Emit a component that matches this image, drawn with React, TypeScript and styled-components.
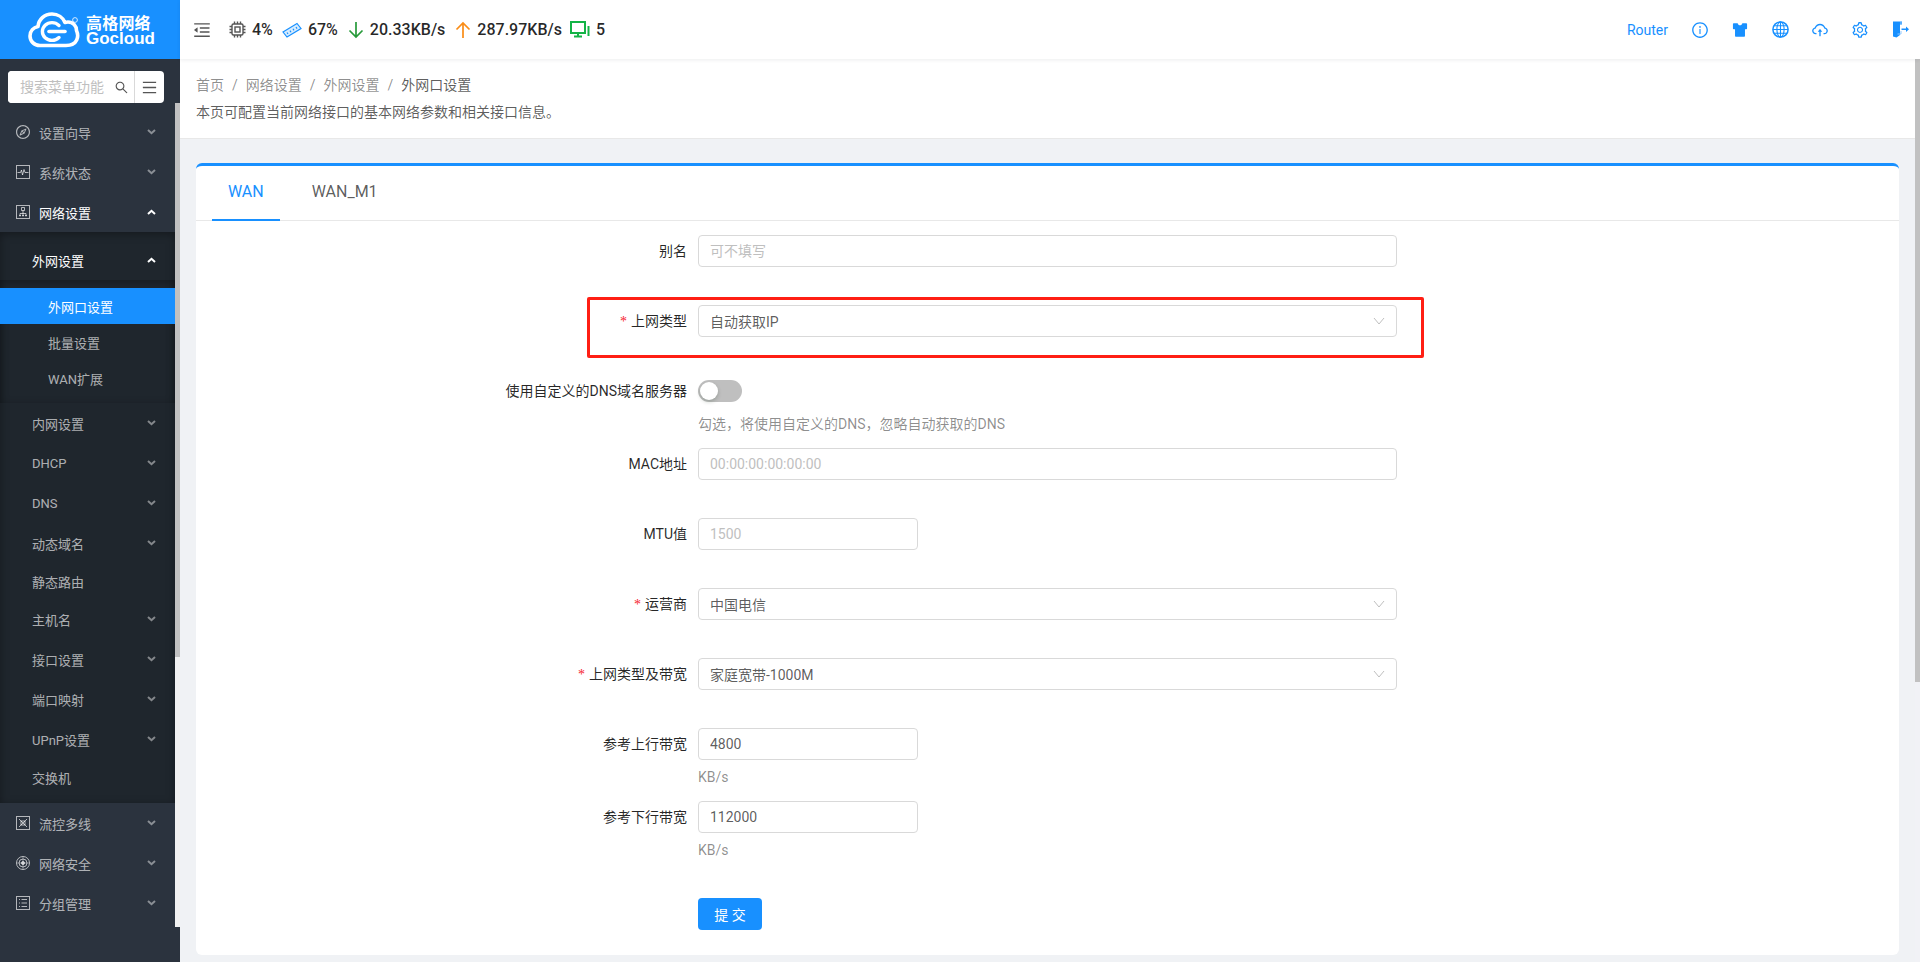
import React from 'react';
import styled, { createGlobalStyle } from 'styled-components';
import {
  AiOutlineInfoCircle,
  AiFillSkin,
  AiOutlineCloudUpload,
  AiOutlineSetting,
  AiOutlineSearch,
  AiOutlineMenu,
  AiOutlineCompass,
  AiOutlineMenuFold,
} from 'react-icons/ai';

const FONT = `Roboto, "Noto Sans CJK SC", sans-serif`;

const GlobalStyle = createGlobalStyle`
  html, body {
    margin: 0;
    height: 100%;
    overflow: hidden;
    background: #f0f2f5;
    font-family: ${FONT};
    font-size: 14px;
  }
  * { box-sizing: border-box; }
`;

const Page = styled.div`
  display: flex;
  width: 1920px;
  height: 962px;
`;

/* ---------- sidebar ---------- */

const Sidebar = styled.aside`
  width: 180px;
  flex: none;
  display: flex;
  flex-direction: column;
  background: #2b333e;
`;

const LogoBar = styled.div`
  height: 59px;
  flex: none;
  background: #1890ff;
  display: flex;
  align-items: center;
  padding: 0 0 0 28px;
  gap: 6px;
  color: #fff;
`;

const LogoText = styled.div`
  display: flex;
  flex-direction: column;
  margin-top: 1px;
`;

const LogoCn = styled.span`
  font: 700 16px/18px "Noto Sans CJK SC", sans-serif;
  letter-spacing: 0.2px;
`;

const LogoEn = styled.span`
  font: 700 17px/16px "Liberation Sans", sans-serif;
`;

const SearchWrap = styled.div`
  flex: none;
  height: 44px;
  padding: 12px 16px 0 8px;
`;

const SearchBox = styled.div`
  display: flex;
  height: 32px;
  background: #fff;
  border-radius: 4px;
  overflow: hidden;
  align-items: center;
`;

const SearchInput = styled.input`
  width: 100px;
  min-width: 0;
  height: 100%;
  border: 0;
  outline: 0;
  padding: 0 0 0 12px;
  font: 14px ${FONT};
  &::placeholder { color: #bfbfbf; }
`;

const SearchGlyph = styled.span`
  width: 26px;
  display: flex;
  justify-content: center;
  color: #555;
  font-size: 15px;
`;

const MenuToggle = styled.span`
  flex: 1;
  height: 100%;
  display: flex;
  align-items: center;
  justify-content: center;
  border-left: 1px solid #d9d9d9;
  color: #555;
  font-size: 17px;
`;

const SideBody = styled.div`
  display: flex;
  height: 824px;
  flex: none;
`;

const MenuList = styled.nav`
  flex: 1;
  padding-top: 9px;
  min-width: 0;
  overflow: hidden;
`;

const SideTrack = styled.div`
  width: 5px;
  flex: none;
  background: #f1f1f1;
`;

const SideThumb = styled.div`
  height: 554px;
  background: #c1c1c1;
`;

const MenuRow = styled.div<{ $active?: boolean; $h?: number; $indent: number }>`
  height: ${p => p.$h ?? 40}px;
  display: flex;
  align-items: center;
  padding-left: ${p => p.$indent}px;
  padding-right: 19px;
  font-size: 13px;
  color: ${p => (p.$active ? '#fff' : 'rgba(255, 255, 255, 0.65)')};
`;

const MenuIcon = styled.span`
  width: 24px;
  flex: none;
  display: flex;
  color: rgba(255, 255, 255, 0.65);
  font-size: 16px;
  margin-left: -1px;
`;

const MenuLabel = styled.span`
  flex: 1;
`;

const SubMenu = styled.div`
  background: #1f262d;
  padding: 8px 0;
  box-shadow: inset 0 2px 8px rgba(0, 0, 0, 0.35);
`;

const SubInner = styled.div`
  padding: 8px 0 7px;
  box-shadow: inset 0 2px 8px rgba(0, 0, 0, 0.3);
`;

const LeafRow = styled.div<{ $selected?: boolean }>`
  height: 36px;
  display: flex;
  align-items: center;
  padding-left: 48px;
  font-size: 13px;
  color: ${p => (p.$selected ? '#fff' : 'rgba(255, 255, 255, 0.65)')};
  background: ${p => (p.$selected ? '#1890ff' : 'transparent')};
`;

const Chevron = ({ up, active }: { up?: boolean; active?: boolean }) => (
  <svg width="9" height="6" viewBox="0 0 9 6">
    <path
      d={up ? 'M1 5L4.5 1.8L8 5' : 'M1 1L4.5 4.2L8 1'}
      fill="none"
      stroke={active ? '#fff' : 'rgba(255,255,255,0.45)'}
      strokeWidth="2"
    />
  </svg>
);

const FrameIcon = ({ children }: { children: React.ReactNode }) => (
  <svg width="14" height="14" viewBox="0 0 14 14" fill="none" stroke="currentColor" strokeWidth="1" style={{ marginLeft: 1 }}>
    <rect x="0.5" y="0.5" width="13" height="13" />
    {children}
  </svg>
);

const PulseIcon = () => (
  <FrameIcon>
    <path d="M1.5 7.5H4.5L5.5 5L6.5 10L8 4.5L9 7.5H12.5" />
  </FrameIcon>
);

const NetIcon = () => (
  <FrameIcon>
    <path d="M5.5 2.5H8.5V5.5H5.5ZM7 5.5V8M4 11.5V8.5H10V11.5M7 8V11.5M3 10.5H5M6 10.5H8M9 10.5H11" />
  </FrameIcon>
);

const FlowIcon = () => (
  <FrameIcon>
    <path d="M3 3L11 11M11 3L3 11M5 5H9V9H5Z" />
  </FrameIcon>
);

const ListIcon = () => (
  <FrameIcon>
    <path d="M5.5 3.5H11M5.5 7H11M5.5 10.5H11M3 3.5H4M3 7H4M3 10.5H4" />
  </FrameIcon>
);

const RadarIcon = () => (
  <svg width="14" height="14" viewBox="0 0 14 14" fill="none" stroke="currentColor" strokeWidth="1" style={{ marginLeft: 1 }}>
    <circle cx="7" cy="7" r="6.5" />
    <circle cx="7" cy="7" r="4" />
    <circle cx="7" cy="7" r="1.5" fill="currentColor" />
    <path d="M0.5 7H13.5M7 0.5V13.5" strokeWidth="0.6" />
  </svg>
);

type ParentItem = { label: string; icon: React.ReactNode };

const topBefore: ParentItem[] = [
  { label: '设置向导', icon: <AiOutlineCompass /> },
  { label: '系统状态', icon: <PulseIcon /> },
];

const topAfter: ParentItem[] = [
  { label: '流控多线', icon: <FlowIcon /> },
  { label: '网络安全', icon: <RadarIcon /> },
  { label: '分组管理', icon: <ListIcon /> },
];

const subItems: { label: string; leaf?: boolean }[] = [
  { label: '内网设置' },
  { label: 'DHCP' },
  { label: 'DNS' },
  { label: '动态域名' },
  { label: '静态路由', leaf: true },
  { label: '主机名' },
  { label: '接口设置' },
  { label: '端口映射' },
  { label: 'UPnP设置' },
  { label: '交换机', leaf: true },
];

const SideMenu = () => (
  <MenuList>
    {topBefore.map(item => (
      <MenuRow key={item.label} $indent={16}>
        <MenuIcon>{item.icon}</MenuIcon>
        <MenuLabel>{item.label}</MenuLabel>
        <Chevron />
      </MenuRow>
    ))}
    <MenuRow $indent={16} $active>
      <MenuIcon><NetIcon /></MenuIcon>
      <MenuLabel>网络设置</MenuLabel>
      <Chevron up active />
    </MenuRow>
    <SubMenu>
      <MenuRow $indent={32} $active>
        <MenuLabel>外网设置</MenuLabel>
        <Chevron up active />
      </MenuRow>
      <SubInner>
        <LeafRow $selected>外网口设置</LeafRow>
        <LeafRow>批量设置</LeafRow>
        <LeafRow>WAN扩展</LeafRow>
      </SubInner>
      {subItems.map(item => (
        <MenuRow key={item.label} $indent={32} $h={item.leaf ? 36 : 40}>
          <MenuLabel>{item.label}</MenuLabel>
          {!item.leaf && <Chevron />}
        </MenuRow>
      ))}
    </SubMenu>
    {topAfter.map(item => (
      <MenuRow key={item.label} $indent={16}>
        <MenuIcon>{item.icon}</MenuIcon>
        <MenuLabel>{item.label}</MenuLabel>
        <Chevron />
      </MenuRow>
    ))}
  </MenuList>
);

const CloudLogo = () => (
  <svg width="52" height="36" viewBox="0 0 52 36" fill="none">
    <path
      d="M12 33.5C6 33.5 2 29 2 24C2 19 5.5 15.5 10 14.5C10.5 7.5 16.5 2 24 2C30 2 35 5.5 37 10.5C38 10.2 39 10 40 10C45 10 48.5 14 48.5 18.5C51 24 50 33.5 38 33.5Z"
      stroke="#fff"
      strokeWidth="3.6"
      strokeLinejoin="round"
    />
    <path d="M31 13.5C29 11.5 26.5 10.6 24 10.6C18.5 10.6 14.4 14.6 14.4 19.5C14.4 24.4 18.5 28.4 24 28.4C26.5 28.4 29 27.5 31 25.5" stroke="#fff" strokeWidth="3.4" strokeLinecap="round" />
    <path d="M21 19.5H37" stroke="#fff" strokeWidth="3.6" strokeLinecap="round" />
    <circle cx="47" cy="8" r="2.4" stroke="#fff" strokeWidth="0.8" />
  </svg>
);

/* ---------- top bar ---------- */

const Content = styled.div`
  flex: 1;
  min-width: 0;
  display: flex;
  flex-direction: column;
`;

const TopBar = styled.header`
  height: 59px;
  flex: none;
  background: #fff;
  display: flex;
  align-items: center;
  box-shadow: 0 1px 4px rgba(0, 21, 41, 0.08);
  position: relative;
  z-index: 1;
`;

const FoldButton = styled.span`
  display: flex;
  margin: 0 17px 0 12px;
  font-size: 20px;
  color: #555;
`;

const Stats = styled.div`
  display: flex;
  align-items: center;
  font: 500 16px ${FONT};
  color: rgba(0, 0, 0, 0.85);
`;

const Stat = styled.span<{ $gap: number }>`
  display: flex;
  align-items: center;
  gap: 6px;
  margin-right: ${p => p.$gap}px;
`;

const TopRight = styled.div`
  margin-left: auto;
  display: flex;
  align-items: center;
  color: #1890ff;
`;

const RouterLink = styled.span`
  font-size: 14px;
  margin-right: 12px;
`;

const TopAction = styled.span`
  width: 40px;
  display: flex;
  justify-content: center;
  font-size: 18px;
`;

const ChipIcon = () => (
  <svg width="17" height="17" viewBox="0 0 17 17" fill="none" stroke="#555" strokeWidth="1.4">
    <rect x="3" y="3" width="11" height="11" rx="1.5" />
    <rect x="6" y="6" width="5" height="5" />
    <path d="M5.5 0.5V3M8.5 0.5V3M11.5 0.5V3M5.5 14V16.5M8.5 14V16.5M11.5 14V16.5M0.5 5.5H3M0.5 8.5H3M0.5 11.5H3M14 5.5H16.5M14 8.5H16.5M14 11.5H16.5" />
  </svg>
);

const RamIcon = () => (
  <svg width="20" height="16" viewBox="0 0 20 16" fill="none" stroke="#1890ff" strokeWidth="1.2">
    <path d="M1 10L15 1.5L19 6.5L5 15Z" fill="#d6ecff" />
    <path d="M5 10.5L6 12M8 8.6L9 10.2M11 6.8L12 8.4M14 5L15 6.6" />
  </svg>
);

const ArrowIcon = ({ up, color }: { up?: boolean; color: string }) => (
  <svg width="16" height="18" viewBox="0 0 16 18" fill="none" stroke={color} strokeWidth="1.7">
    {up ? <path d="M8 17V2M1.5 8.5L8 2L14.5 8.5" /> : <path d="M8 1V16M1.5 9.5L8 16L14.5 9.5" />}
  </svg>
);

const MonitorIcon = () => (
  <svg width="20" height="17" viewBox="0 0 20 17" fill="none">
    <rect x="1" y="1" width="14" height="11" stroke="#13b346" strokeWidth="2" fill="#fff" />
    <path d="M8 12V15M4 15.5H12" stroke="#13b346" strokeWidth="2" />
    <path d="M18.5 5V15" stroke="#13b346" strokeWidth="2" />
  </svg>
);

const GlobeIcon = () => (
  <svg width="17" height="17" viewBox="0 0 17 17" fill="none" stroke="#1890ff" strokeWidth="1.1">
    <circle cx="8.5" cy="8.5" r="7.6" strokeWidth="1.5" />
    <ellipse cx="8.5" cy="8.5" rx="3.6" ry="7.6" />
    <path d="M8.5 1V16M1 8.5H16M2 4.8H15M2 12.2H15" />
  </svg>
);

const DoorIcon = () => (
  <svg width="17" height="17" viewBox="0 0 17 17">
    <path d="M1 0.5H10V3.5H8L8 14L4.5 16.5L1 15.5Z" fill="#1890ff" />
    <path d="M9 0.5V3.5M9 10V13H5.5" stroke="#8ec8ff" strokeWidth="1" fill="none" />
    <path d="M9.5 7.5H14V5.5L17 8.2L14 11V9H9.5Z" fill="#1890ff" />
  </svg>
);

/* ---------- main ---------- */

const MainRow = styled.div`
  flex: 1;
  min-height: 0;
  display: flex;
`;

const MainScroll = styled.main`
  flex: 1;
  min-width: 0;
`;

const PageTrack = styled.div`
  width: 5px;
  flex: none;
  background: #f1f2f6;
`;

const PageThumb = styled.div`
  height: 623px;
  background: #c1c1c1;
`;

const PageHeader = styled.section`
  height: 80px;
  background: #fff;
  border-bottom: 1px solid #e8e8e8;
  padding: 16px 16px 0;
`;

const Crumbs = styled.div`
  line-height: 20px;
  display: flex;
  color: rgba(0, 0, 0, 0.45);
`;

const CrumbSep = styled.span`
  margin: 0 8px;
`;

const CrumbLast = styled.span`
  color: rgba(0, 0, 0, 0.65);
`;

const PageDesc = styled.div`
  margin-top: 7px;
  line-height: 20px;
  color: rgba(0, 0, 0, 0.65);
`;

const Card = styled.section`
  margin: 24px 16px 0;
  height: 792px;
  background: #fff;
  border-top: 3px solid #1890ff;
  border-radius: 6px;
`;

const Tabs = styled.div`
  height: 55px;
  display: flex;
  padding-left: 16px;
  border-bottom: 1px solid #e8e8e8;
  gap: 16px;
`;

const Tab = styled.div<{ $active?: boolean }>`
  height: 55px;
  padding: 0 16px;
  display: flex;
  align-items: center;
  font-size: 16px;
  padding-bottom: 2px;
  color: ${p => (p.$active ? '#1890ff' : 'rgba(0, 0, 0, 0.65)')};
  border-bottom: 2px solid ${p => (p.$active ? '#1890ff' : 'transparent')};
`;

const FormBody = styled.form`
  padding-top: 14px;
`;

const FormRow = styled.div<{ $extra?: boolean }>`
  position: relative;
  display: grid;
  grid-template-columns: 502px 1fr;
  margin-bottom: ${p => (p.$extra ? 13 : 38)}px;
`;

const Label = styled.label`
  height: 32px;
  line-height: 32px;
  padding-right: 11px;
  text-align: right;
  color: rgba(0, 0, 0, 0.85);
`;

const Star = styled.span`
  color: #f5222d;
  margin-right: 4px;
  font-family: "Liberation Serif", serif;
`;

const TextInput = styled.input<{ $short?: boolean }>`
  display: block;
  width: ${p => (p.$short ? 220 : 699)}px;
  height: 32px;
  padding: 0 11px;
  border: 1px solid #d9d9d9;
  border-radius: 4px;
  outline: 0;
  font: 14px ${FONT};
  color: rgba(0, 0, 0, 0.65);
  &::placeholder { color: #bfbfbf; }
`;

const SelectBox = styled.div`
  width: 699px;
  height: 32px;
  padding: 0 11px;
  border: 1px solid #d9d9d9;
  border-radius: 4px;
  display: flex;
  align-items: center;
  justify-content: space-between;
  color: rgba(0, 0, 0, 0.65);
`;

const SwitchLine = styled.div`
  height: 32px;
  display: flex;
  align-items: center;
`;

const Switch = styled.span`
  width: 44px;
  height: 22px;
  border-radius: 11px;
  background: #bfbfbf;
  padding: 2px;
  display: block;
`;

const Knob = styled.span`
  display: block;
  width: 18px;
  height: 18px;
  border-radius: 50%;
  background: #fff;
  box-shadow: 0 2px 4px rgba(0, 35, 11, 0.2);
`;

const Extra = styled.div`
  margin-top: 6px;
  line-height: 22px;
  color: rgba(0, 0, 0, 0.45);
`;

const Highlight = styled.div`
  position: absolute;
  left: 391px;
  top: -8px;
  width: 837px;
  height: 61px;
  border: 3px solid #ff1f14;
  border-radius: 2px;
  pointer-events: none;
`;

const SubmitRow = styled.div`
  padding: 24px 0 0 502px;
`;

const SubmitButton = styled.button`
  width: 64px;
  height: 32px;
  border: 0;
  border-radius: 4px;
  background: #1890ff;
  color: #fff;
  font: 14px ${FONT};
  letter-spacing: 0;
`;

const SelectArrow = () => (
  <svg width="12" height="8" viewBox="0 0 12 8" fill="none" stroke="#bfbfbf" strokeWidth="1">
    <path d="M1 1L6 7L11 1" />
  </svg>
);

const Select = ({ value }: { value: string }) => (
  <SelectBox>
    {value}
    <SelectArrow />
  </SelectBox>
);

export default function App() {
  return (
    <Page>
      <GlobalStyle />
      <Sidebar>
        <LogoBar>
          <CloudLogo />
          <LogoText>
            <LogoCn>高格网络</LogoCn>
            <LogoEn>Gocloud</LogoEn>
          </LogoText>
        </LogoBar>
        <SearchWrap>
          <SearchBox>
            <SearchInput placeholder="搜索菜单功能" readOnly />
            <SearchGlyph><AiOutlineSearch /></SearchGlyph>
            <MenuToggle><AiOutlineMenu /></MenuToggle>
          </SearchBox>
        </SearchWrap>
        <SideBody>
          <SideMenu />
          <SideTrack><SideThumb /></SideTrack>
        </SideBody>
      </Sidebar>
      <Content>
        <TopBar>
          <FoldButton><AiOutlineMenuFold /></FoldButton>
          <Stats>
            <Stat $gap={9}><ChipIcon />4%</Stat>
            <Stat $gap={10}><RamIcon />67%</Stat>
            <Stat $gap={10}><ArrowIcon color="#279a3a" />20.33KB/s</Stat>
            <Stat $gap={8}><ArrowIcon up color="#fa8c16" />287.97KB/s</Stat>
            <Stat $gap={0}><MonitorIcon />5</Stat>
          </Stats>
          <TopRight>
            <RouterLink>Router</RouterLink>
            <TopAction><AiOutlineInfoCircle /></TopAction>
            <TopAction><AiFillSkin /></TopAction>
            <TopAction><GlobeIcon /></TopAction>
            <TopAction><AiOutlineCloudUpload /></TopAction>
            <TopAction><AiOutlineSetting /></TopAction>
            <TopAction><DoorIcon /></TopAction>
          </TopRight>
        </TopBar>
        <MainRow>
          <MainScroll>
            <PageHeader>
              <Crumbs>
                首页<CrumbSep>/</CrumbSep>
                网络设置<CrumbSep>/</CrumbSep>
                外网设置<CrumbSep>/</CrumbSep>
                <CrumbLast>外网口设置</CrumbLast>
              </Crumbs>
              <PageDesc>本页可配置当前网络接口的基本网络参数和相关接口信息。</PageDesc>
            </PageHeader>
            <Card>
              <Tabs>
                <Tab $active>WAN</Tab>
                <Tab>WAN_M1</Tab>
              </Tabs>
              <FormBody>
                <FormRow>
                  <Label>别名</Label>
                  <TextInput placeholder="可不填写" readOnly />
                </FormRow>
                <FormRow>
                  <Highlight />
                  <Label><Star>*</Star>上网类型</Label>
                  <Select value="自动获取IP" />
                </FormRow>
                <FormRow $extra>
                  <Label>使用自定义的DNS域名服务器</Label>
                  <div>
                    <SwitchLine><Switch><Knob /></Switch></SwitchLine>
                    <Extra>勾选，将使用自定义的DNS，忽略自动获取的DNS</Extra>
                  </div>
                </FormRow>
                <FormRow>
                  <Label>MAC地址</Label>
                  <TextInput placeholder="00:00:00:00:00:00" readOnly />
                </FormRow>
                <FormRow>
                  <Label>MTU值</Label>
                  <TextInput $short placeholder="1500" readOnly />
                </FormRow>
                <FormRow>
                  <Label><Star>*</Star>运营商</Label>
                  <Select value="中国电信" />
                </FormRow>
                <FormRow>
                  <Label><Star>*</Star>上网类型及带宽</Label>
                  <Select value="家庭宽带-1000M" />
                </FormRow>
                <FormRow $extra>
                  <Label>参考上行带宽</Label>
                  <div>
                    <TextInput $short defaultValue="4800" readOnly />
                    <Extra>KB/s</Extra>
                  </div>
                </FormRow>
                <FormRow $extra>
                  <Label>参考下行带宽</Label>
                  <div>
                    <TextInput $short defaultValue="112000" readOnly />
                    <Extra>KB/s</Extra>
                  </div>
                </FormRow>
                <SubmitRow>
                  <SubmitButton type="button">提 交</SubmitButton>
                </SubmitRow>
              </FormBody>
            </Card>
          </MainScroll>
          <PageTrack><PageThumb /></PageTrack>
        </MainRow>
      </Content>
    </Page>
  );
}
